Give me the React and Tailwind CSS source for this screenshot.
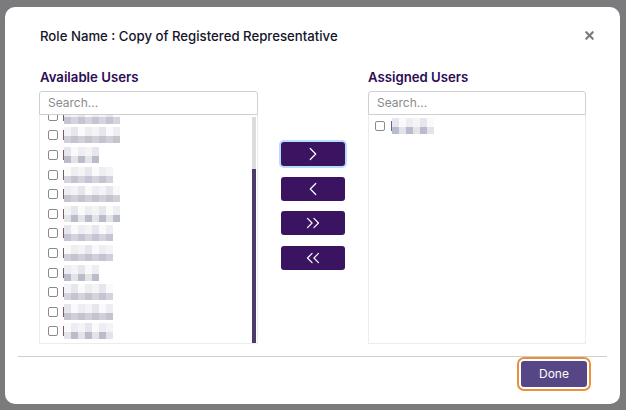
import { ChevronRight, ChevronLeft, ChevronsRight, ChevronsLeft, X } from 'lucide-react'

const tones = ['bg-[#c3c5d2]', 'bg-[#cfd0da]', 'bg-[#b9bccb]', 'bg-[#d6d3dc]', 'bg-[#c8c2cf]', 'bg-[#e3e3e8]']
const lights = ['bg-[#eeeef2]', 'bg-[#f4f4f6]', 'bg-[#e6e6ec]', 'bg-[#fafafa]']

const available = [8, 8, 5, 7, 8, 8, 7, 7, 5, 7, 7, 7]

function Mosaic({ cells, seed }) {
  return (
    <div className="flex flex-col">
      <div className="flex">
        {Array.from({ length: cells }).map((_, i) => (
          <div key={i} className={`h-[9px] w-[7px] ${lights[(i + seed) % lights.length]}`} />
        ))}
      </div>
      <div className="flex">
        {Array.from({ length: cells }).map((_, i) => (
          <div key={i} className={`h-[7px] w-[7px] ${tones[(i * 3 + seed) % tones.length]}`} />
        ))}
      </div>
    </div>
  )
}

function Row({ cells, seed }) {
  return (
    <div className="flex h-[19.6px] items-center pl-[8px]">
      <span className="h-[10px] w-[10px] rounded-[2px] border border-[#8a8a8a] bg-white" />
      <span className="ml-[5px] h-[10px] w-[1px] bg-[#7a5a6a]" />
      <Mosaic cells={cells} seed={seed} />
    </div>
  )
}

function Search() {
  return (
    <div className="flex h-[24px] items-center rounded-t-[3px] border border-[#cfcfcf] px-[8px] text-[12px] text-[#8a8a8a]">
      Search...
    </div>
  )
}

function MoveButton({ children, focused }) {
  return (
    <button
      className={`flex h-[24px] w-[64px] items-center justify-center rounded-[3px] bg-[#3a1461] text-white ${
        focused ? 'ring-2 ring-[#b9dcfb]' : ''
      }`}
    >
      {children}
    </button>
  )
}

export default function App() {
  return (
    <div
      className="relative h-[410px] w-[626px] overflow-hidden bg-[#7b7b7d] pl-[5px] pt-[7px]"
      style={{ fontFamily: 'Inter, "Liberation Sans", sans-serif' }}
    >
      <div className="relative h-[397px] w-[615px] rounded-[10px] bg-white">
        <div className="flex h-[38px] items-end pl-[35px]">
          <h2 className="h-[18px] text-[13.2px] font-medium leading-[18px] text-[#15152a]">
            Role Name : Copy of Registered Representative
          </h2>
        </div>
        <X className="absolute right-[24px] top-[22px] text-[#7a7a7a]" size={13} strokeWidth={4} />

        <div className="mt-[23px] flex pl-[34px]">
          <div className="w-[219px]">
            <div className="mb-[5px] h-[18px] pl-[1px] text-[13.2px] font-semibold leading-[18px] text-[#2c0c55]">
              Available Users
            </div>
            <Search />
            <div className="relative h-[229px] overflow-hidden border border-t-0 border-[#ececec]">
              <div className="-mt-[9px]">
                {available.map((c, i) => (
                  <Row key={i} cells={c} seed={i} />
                ))}
              </div>
              <div className="absolute right-[1px] top-[2px] flex h-[226px] w-[4px] flex-col">
                <div className="h-[52px] bg-[#dcdcdc]" />
                <div className="flex-1 bg-[#4e3b6d]" />
              </div>
            </div>
          </div>

          <div className="flex flex-col gap-[10.5px] pl-[23px] pr-[23px] pt-[74px]">
            <MoveButton focused>
              <ChevronRight size={22} strokeWidth={1.3} />
            </MoveButton>
            <MoveButton>
              <ChevronLeft size={22} strokeWidth={1.3} />
            </MoveButton>
            <MoveButton>
              <ChevronsRight size={22} strokeWidth={1.3} />
            </MoveButton>
            <MoveButton>
              <ChevronsLeft size={22} strokeWidth={1.3} />
            </MoveButton>
          </div>

          <div className="w-[218px]">
            <div className="mb-[5px] h-[18px] text-[13.2px] font-semibold leading-[18px] text-[#2c0c55]">
              Assigned Users
            </div>
            <Search />
            <div className="h-[229px] border border-t-0 border-[#ececec] pt-[1px]">
              <div className="flex h-[19.6px] items-center pl-[6px]">
                <span className="h-[10px] w-[10px] rounded-[2px] border border-[#8a8a8a] bg-white" />
                <span className="ml-[6px] h-[10px] w-[1px] bg-[#5a6a9a]" />
                <Mosaic cells={6} seed={2} />
              </div>
            </div>
          </div>
        </div>

        <div className="mx-[13px] mt-[12px] border-t border-[#cfcfcf]" />

        <div className="flex justify-end pr-[33px] pt-[4px]">
          <button className="h-[26px] w-[66px] rounded-[3px] bg-[#574686] text-[12px] text-white outline-2 outline-offset-2 outline-[#e8913a]">
            Done
          </button>
        </div>
      </div>
    </div>
  )
}
